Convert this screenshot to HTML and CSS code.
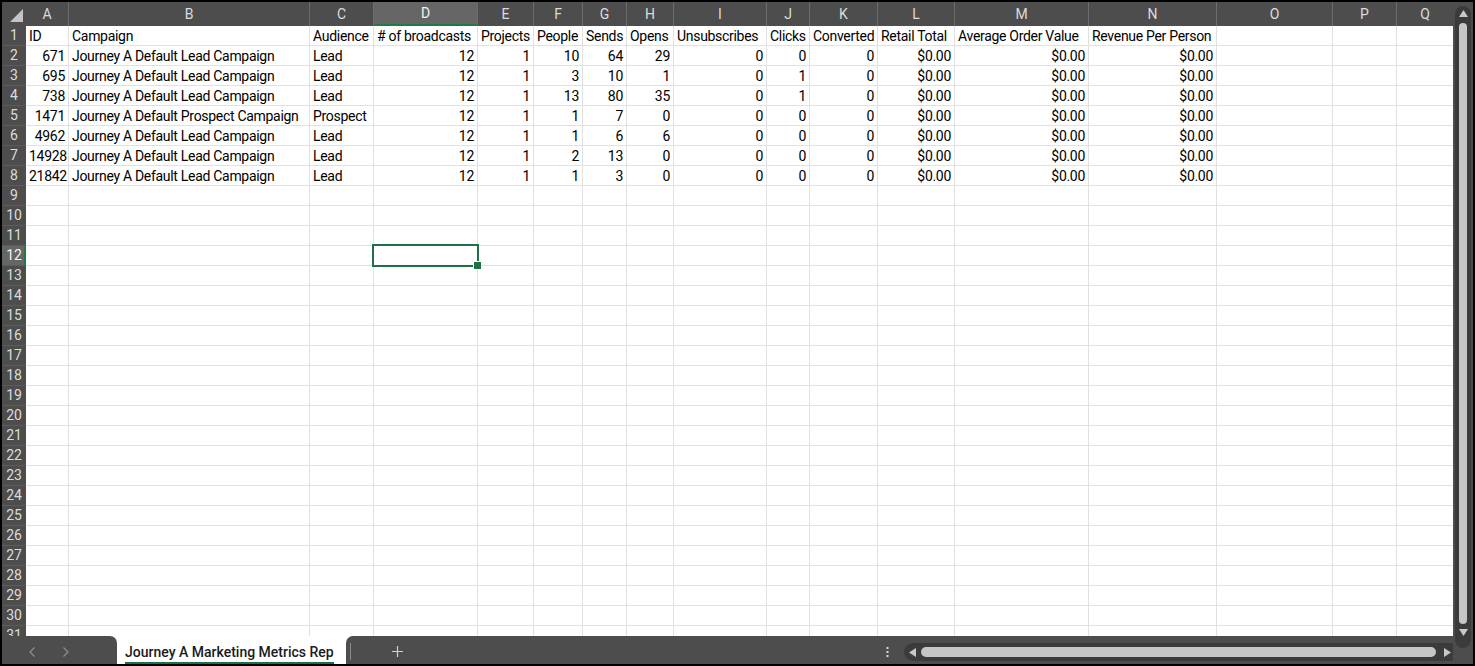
FILE: index.html
```html
<!DOCTYPE html>
<html>
<head>
<meta charset="utf-8">
<title>Journey A Marketing Metrics Rep</title>
<link rel="stylesheet" href="styles.css">
</head>
<body>
<div class="window">
  <div class="workarea">
    <div class="sheet">
      <div class="grid">
        <div class="corner"><svg width="24" height="24" viewBox="0 0 24 24"><polygon points="21,7 21,20 8,20" fill="#c4c4c4"/></svg></div>
        <div class="ch">A</div><div class="ch">B</div><div class="ch">C</div><div class="ch sel">D</div><div class="ch">E</div><div class="ch">F</div><div class="ch">G</div><div class="ch">H</div><div class="ch">I</div><div class="ch">J</div><div class="ch">K</div><div class="ch">L</div><div class="ch">M</div><div class="ch">N</div><div class="ch">O</div><div class="ch">P</div><div class="ch last">Q</div>

        <div class="rh">1</div><div class="c">ID</div><div class="c">Campaign</div><div class="c">Audience</div><div class="c"># of broadcasts</div><div class="c">Projects</div><div class="c">People</div><div class="c">Sends</div><div class="c">Opens</div><div class="c">Unsubscribes</div><div class="c">Clicks</div><div class="c">Converted</div><div class="c">Retail Total</div><div class="c">Average Order Value</div><div class="c">Revenue Per Person</div><div class="c"></div><div class="c"></div><div class="c q"></div>

        <div class="rh">2</div><div class="c n">671</div><div class="c">Journey A Default Lead Campaign</div><div class="c">Lead</div><div class="c n">12</div><div class="c n">1</div><div class="c n">10</div><div class="c n">64</div><div class="c n">29</div><div class="c n">0</div><div class="c n">0</div><div class="c n">0</div><div class="c n">$0.00</div><div class="c n">$0.00</div><div class="c n">$0.00</div><div class="c"></div><div class="c"></div><div class="c q"></div>

        <div class="rh">3</div><div class="c n">695</div><div class="c">Journey A Default Lead Campaign</div><div class="c">Lead</div><div class="c n">12</div><div class="c n">1</div><div class="c n">3</div><div class="c n">10</div><div class="c n">1</div><div class="c n">0</div><div class="c n">1</div><div class="c n">0</div><div class="c n">$0.00</div><div class="c n">$0.00</div><div class="c n">$0.00</div><div class="c"></div><div class="c"></div><div class="c q"></div>

        <div class="rh">4</div><div class="c n">738</div><div class="c">Journey A Default Lead Campaign</div><div class="c">Lead</div><div class="c n">12</div><div class="c n">1</div><div class="c n">13</div><div class="c n">80</div><div class="c n">35</div><div class="c n">0</div><div class="c n">1</div><div class="c n">0</div><div class="c n">$0.00</div><div class="c n">$0.00</div><div class="c n">$0.00</div><div class="c"></div><div class="c"></div><div class="c q"></div>

        <div class="rh">5</div><div class="c n">1471</div><div class="c">Journey A Default Prospect Campaign</div><div class="c">Prospect</div><div class="c n">12</div><div class="c n">1</div><div class="c n">1</div><div class="c n">7</div><div class="c n">0</div><div class="c n">0</div><div class="c n">0</div><div class="c n">0</div><div class="c n">$0.00</div><div class="c n">$0.00</div><div class="c n">$0.00</div><div class="c"></div><div class="c"></div><div class="c q"></div>

        <div class="rh">6</div><div class="c n">4962</div><div class="c">Journey A Default Lead Campaign</div><div class="c">Lead</div><div class="c n">12</div><div class="c n">1</div><div class="c n">1</div><div class="c n">6</div><div class="c n">6</div><div class="c n">0</div><div class="c n">0</div><div class="c n">0</div><div class="c n">$0.00</div><div class="c n">$0.00</div><div class="c n">$0.00</div><div class="c"></div><div class="c"></div><div class="c q"></div>

        <div class="rh">7</div><div class="c n">14928</div><div class="c">Journey A Default Lead Campaign</div><div class="c">Lead</div><div class="c n">12</div><div class="c n">1</div><div class="c n">2</div><div class="c n">13</div><div class="c n">0</div><div class="c n">0</div><div class="c n">0</div><div class="c n">0</div><div class="c n">$0.00</div><div class="c n">$0.00</div><div class="c n">$0.00</div><div class="c"></div><div class="c"></div><div class="c q"></div>

        <div class="rh">8</div><div class="c n">21842</div><div class="c">Journey A Default Lead Campaign</div><div class="c">Lead</div><div class="c n">12</div><div class="c n">1</div><div class="c n">1</div><div class="c n">3</div><div class="c n">0</div><div class="c n">0</div><div class="c n">0</div><div class="c n">0</div><div class="c n">$0.00</div><div class="c n">$0.00</div><div class="c n">$0.00</div><div class="c"></div><div class="c"></div><div class="c q"></div>

        <div class="rh">9</div><div class="c"></div><div class="c"></div><div class="c"></div><div class="c"></div><div class="c"></div><div class="c"></div><div class="c"></div><div class="c"></div><div class="c"></div><div class="c"></div><div class="c"></div><div class="c"></div><div class="c"></div><div class="c"></div><div class="c"></div><div class="c"></div><div class="c q"></div>
        <div class="rh">10</div><div class="c"></div><div class="c"></div><div class="c"></div><div class="c"></div><div class="c"></div><div class="c"></div><div class="c"></div><div class="c"></div><div class="c"></div><div class="c"></div><div class="c"></div><div class="c"></div><div class="c"></div><div class="c"></div><div class="c"></div><div class="c"></div><div class="c q"></div>
        <div class="rh">11</div><div class="c"></div><div class="c"></div><div class="c"></div><div class="c"></div><div class="c"></div><div class="c"></div><div class="c"></div><div class="c"></div><div class="c"></div><div class="c"></div><div class="c"></div><div class="c"></div><div class="c"></div><div class="c"></div><div class="c"></div><div class="c"></div><div class="c q"></div>
        <div class="rh sel">12</div><div class="c"></div><div class="c"></div><div class="c"></div><div class="c active"></div><div class="c"></div><div class="c"></div><div class="c"></div><div class="c"></div><div class="c"></div><div class="c"></div><div class="c"></div><div class="c"></div><div class="c"></div><div class="c"></div><div class="c"></div><div class="c"></div><div class="c q"></div>
        <div class="rh">13</div><div class="c"></div><div class="c"></div><div class="c"></div><div class="c"></div><div class="c"></div><div class="c"></div><div class="c"></div><div class="c"></div><div class="c"></div><div class="c"></div><div class="c"></div><div class="c"></div><div class="c"></div><div class="c"></div><div class="c"></div><div class="c"></div><div class="c q"></div>
        <div class="rh">14</div><div class="c"></div><div class="c"></div><div class="c"></div><div class="c"></div><div class="c"></div><div class="c"></div><div class="c"></div><div class="c"></div><div class="c"></div><div class="c"></div><div class="c"></div><div class="c"></div><div class="c"></div><div class="c"></div><div class="c"></div><div class="c"></div><div class="c q"></div>
        <div class="rh">15</div><div class="c"></div><div class="c"></div><div class="c"></div><div class="c"></div><div class="c"></div><div class="c"></div><div class="c"></div><div class="c"></div><div class="c"></div><div class="c"></div><div class="c"></div><div class="c"></div><div class="c"></div><div class="c"></div><div class="c"></div><div class="c"></div><div class="c q"></div>
        <div class="rh">16</div><div class="c"></div><div class="c"></div><div class="c"></div><div class="c"></div><div class="c"></div><div class="c"></div><div class="c"></div><div class="c"></div><div class="c"></div><div class="c"></div><div class="c"></div><div class="c"></div><div class="c"></div><div class="c"></div><div class="c"></div><div class="c"></div><div class="c q"></div>
        <div class="rh">17</div><div class="c"></div><div class="c"></div><div class="c"></div><div class="c"></div><div class="c"></div><div class="c"></div><div class="c"></div><div class="c"></div><div class="c"></div><div class="c"></div><div class="c"></div><div class="c"></div><div class="c"></div><div class="c"></div><div class="c"></div><div class="c"></div><div class="c q"></div>
        <div class="rh">18</div><div class="c"></div><div class="c"></div><div class="c"></div><div class="c"></div><div class="c"></div><div class="c"></div><div class="c"></div><div class="c"></div><div class="c"></div><div class="c"></div><div class="c"></div><div class="c"></div><div class="c"></div><div class="c"></div><div class="c"></div><div class="c"></div><div class="c q"></div>
        <div class="rh">19</div><div class="c"></div><div class="c"></div><div class="c"></div><div class="c"></div><div class="c"></div><div class="c"></div><div class="c"></div><div class="c"></div><div class="c"></div><div class="c"></div><div class="c"></div><div class="c"></div><div class="c"></div><div class="c"></div><div class="c"></div><div class="c"></div><div class="c q"></div>
        <div class="rh">20</div><div class="c"></div><div class="c"></div><div class="c"></div><div class="c"></div><div class="c"></div><div class="c"></div><div class="c"></div><div class="c"></div><div class="c"></div><div class="c"></div><div class="c"></div><div class="c"></div><div class="c"></div><div class="c"></div><div class="c"></div><div class="c"></div><div class="c q"></div>
        <div class="rh">21</div><div class="c"></div><div class="c"></div><div class="c"></div><div class="c"></div><div class="c"></div><div class="c"></div><div class="c"></div><div class="c"></div><div class="c"></div><div class="c"></div><div class="c"></div><div class="c"></div><div class="c"></div><div class="c"></div><div class="c"></div><div class="c"></div><div class="c q"></div>
        <div class="rh">22</div><div class="c"></div><div class="c"></div><div class="c"></div><div class="c"></div><div class="c"></div><div class="c"></div><div class="c"></div><div class="c"></div><div class="c"></div><div class="c"></div><div class="c"></div><div class="c"></div><div class="c"></div><div class="c"></div><div class="c"></div><div class="c"></div><div class="c q"></div>
        <div class="rh">23</div><div class="c"></div><div class="c"></div><div class="c"></div><div class="c"></div><div class="c"></div><div class="c"></div><div class="c"></div><div class="c"></div><div class="c"></div><div class="c"></div><div class="c"></div><div class="c"></div><div class="c"></div><div class="c"></div><div class="c"></div><div class="c"></div><div class="c q"></div>
        <div class="rh">24</div><div class="c"></div><div class="c"></div><div class="c"></div><div class="c"></div><div class="c"></div><div class="c"></div><div class="c"></div><div class="c"></div><div class="c"></div><div class="c"></div><div class="c"></div><div class="c"></div><div class="c"></div><div class="c"></div><div class="c"></div><div class="c"></div><div class="c q"></div>
        <div class="rh">25</div><div class="c"></div><div class="c"></div><div class="c"></div><div class="c"></div><div class="c"></div><div class="c"></div><div class="c"></div><div class="c"></div><div class="c"></div><div class="c"></div><div class="c"></div><div class="c"></div><div class="c"></div><div class="c"></div><div class="c"></div><div class="c"></div><div class="c q"></div>
        <div class="rh">26</div><div class="c"></div><div class="c"></div><div class="c"></div><div class="c"></div><div class="c"></div><div class="c"></div><div class="c"></div><div class="c"></div><div class="c"></div><div class="c"></div><div class="c"></div><div class="c"></div><div class="c"></div><div class="c"></div><div class="c"></div><div class="c"></div><div class="c q"></div>
        <div class="rh">27</div><div class="c"></div><div class="c"></div><div class="c"></div><div class="c"></div><div class="c"></div><div class="c"></div><div class="c"></div><div class="c"></div><div class="c"></div><div class="c"></div><div class="c"></div><div class="c"></div><div class="c"></div><div class="c"></div><div class="c"></div><div class="c"></div><div class="c q"></div>
        <div class="rh">28</div><div class="c"></div><div class="c"></div><div class="c"></div><div class="c"></div><div class="c"></div><div class="c"></div><div class="c"></div><div class="c"></div><div class="c"></div><div class="c"></div><div class="c"></div><div class="c"></div><div class="c"></div><div class="c"></div><div class="c"></div><div class="c"></div><div class="c q"></div>
        <div class="rh">29</div><div class="c"></div><div class="c"></div><div class="c"></div><div class="c"></div><div class="c"></div><div class="c"></div><div class="c"></div><div class="c"></div><div class="c"></div><div class="c"></div><div class="c"></div><div class="c"></div><div class="c"></div><div class="c"></div><div class="c"></div><div class="c"></div><div class="c q"></div>
        <div class="rh">30</div><div class="c"></div><div class="c"></div><div class="c"></div><div class="c"></div><div class="c"></div><div class="c"></div><div class="c"></div><div class="c"></div><div class="c"></div><div class="c"></div><div class="c"></div><div class="c"></div><div class="c"></div><div class="c"></div><div class="c"></div><div class="c"></div><div class="c q"></div>
        <div class="rh">31</div><div class="c"></div><div class="c"></div><div class="c"></div><div class="c"></div><div class="c"></div><div class="c"></div><div class="c"></div><div class="c"></div><div class="c"></div><div class="c"></div><div class="c"></div><div class="c"></div><div class="c"></div><div class="c"></div><div class="c"></div><div class="c"></div><div class="c q"></div>
      </div>
    </div>
    <div class="tabbar">
      <div class="nav">
        <svg width="115" height="28" viewBox="0 0 115 28"><polyline points="32.5,11.5 28,16 32.5,20.5" fill="none" stroke="#8c8c8c" stroke-width="1.3"/><polyline points="61.5,11.5 66,16 61.5,20.5" fill="none" stroke="#8c8c8c" stroke-width="1.3"/></svg>
      </div>
      <div class="tab"><span class="tab-label">Journey A Marketing Metrics Rep</span></div>
      <div class="rest">
        <span class="sep"></span>
        <svg class="add" width="11" height="11" viewBox="0 0 11 11"><path d="M5.5 0V11M0 5.5H11" stroke="#d2d2d2" stroke-width="1.2"/></svg>
        <svg class="dots" width="3" height="12" viewBox="0 0 3 12"><rect x="0.5" y="1" width="2" height="2" fill="#d8d8d8"/><rect x="0.5" y="5" width="2" height="2" fill="#d8d8d8"/><rect x="0.5" y="9" width="2" height="2" fill="#d8d8d8"/></svg>
        <div class="hscroll">
          <svg class="harrow-l" width="7" height="9" viewBox="0 0 7 9"><polygon points="7,0 7,9 0,4.5" fill="#c8c8c8"/></svg>
          <div class="hthumb"></div>
          <svg class="harrow-r" width="7" height="9" viewBox="0 0 7 9"><polygon points="0,0 0,9 7,4.5" fill="#c8c8c8"/></svg>
        </div>
      </div>
    </div>
  </div>
  <div class="vcol">
    <div class="vtrack">
      <svg class="varrow-u" width="9" height="7" viewBox="0 0 9 7"><polygon points="0,7 9,7 4.5,0" fill="#c8c8c8"/></svg>
      <div class="vthumb"></div>
      <svg class="varrow-d" width="9" height="7" viewBox="0 0 9 7"><polygon points="0,0 9,0 4.5,7" fill="#c8c8c8"/></svg>
    </div>
  </div>
</div>
</body>
</html>
```

FILE: styles.css
```css
* { box-sizing: border-box; }
html, body { margin: 0; padding: 0; background: #000; }

.window {
  width: 1475px;
  height: 666px;
  border: 2px solid #000;
  display: flex;
  background: #4d4d4d;
  overflow: hidden;
}

.workarea {
  width: 1451px;
  display: flex;
  flex-direction: column;
}

.sheet {
  height: 634px;
  overflow: hidden;
  background: #fff;
}

.grid {
  display: grid;
  grid-template-columns: 24px 43px 241px 64px 104px 56px 49px 44px 47px 93px 43px 68px 77px 134px 128px 116px 64px 1fr;
  grid-template-rows: 24px;
  grid-auto-rows: 20px;
  font-family: Roboto, "Liberation Sans", sans-serif;
}

.corner {
  background: #4d4d4d;
}
.corner svg { display: block; }

.ch {
  background: #4d4d4d;
  color: #dcdcdc;
  font-size: 14px;
  line-height: 24px;
  text-align: center;
  border-right: 1px solid #6c6c6c;
}
.ch.last { border-right: none; }
.ch.sel {
  background: #666666;
  color: #f2f2f2;
  border-bottom: 2px solid #1f7a45;
  line-height: 22px;
}

.rh {
  background: #4d4d4d;
  color: #dcdcdc;
  font-size: 14px;
  line-height: 19px;
  text-align: center;
  border-bottom: 1px solid #5c5c5c;
}
.rh.sel {
  background: #666666;
  color: #f2f2f2;
  box-shadow: inset -2px 0 0 #1f7a45;
}

.c {
  border-right: 1px solid #e1e1e1;
  border-bottom: 1px solid #e1e1e1;
  color: #000;
  font-size: 14px;
  line-height: 18px;
  padding: 1px 3px 0 3px;
  white-space: nowrap;
  overflow: visible;
  letter-spacing: -0.3px;
}
.c.n { text-align: right; padding-right: 3px; }
.c.q { border-right: none; }

.c.active { position: relative; }
.c.active::after {
  content: "";
  position: absolute;
  left: -2px;
  top: -2px;
  right: -2px;
  bottom: -2px;
  border: 2px solid #1f7145;
}
.c.active::before {
  content: "";
  position: absolute;
  right: -4px;
  bottom: -4px;
  width: 7px;
  height: 7px;
  background: #1f7145;
  border-left: 1px solid #fff;
  border-top: 1px solid #fff;
  z-index: 2;
}

.tabbar {
  height: 28px;
  display: flex;
  background: #fff;
}

.nav {
  width: 115px;
  background: #4d4d4d;
  border-top-right-radius: 7px;
}
.nav svg { display: block; }

.tab {
  width: 229px;
  background: #fff;
  padding: 6px 0 0 8px;
  font-family: Roboto, "Liberation Sans", sans-serif;
}
.tab-label {
  display: inline-block;
  font-size: 14px;
  font-weight: 500;
  line-height: 17px;
  color: #1b1b1b;
  padding-bottom: 1px;
  border-bottom: 2px solid #1f7145;
  white-space: nowrap;
}

.rest {
  flex: 1;
  background: #4d4d4d;
  border-top-left-radius: 7px;
  display: flex;
  align-items: flex-start;
}

.sep {
  width: 1px;
  height: 17px;
  background: #8a8a8a;
  margin: 7px 0 0 4px;
}

.add {
  display: block;
  margin: 10px 0 0 41px;
}

.dots {
  display: block;
  margin: 10px 15px 0 auto;
}

.hscroll {
  width: 549px;
  height: 18px;
  margin-top: 7px;
  background: #3b3b3b;
  border-radius: 9px 0 0 9px;
  display: flex;
  align-items: center;
}
.harrow-l { display: block; margin-left: 5px; }
.hthumb {
  flex: 1;
  height: 10px;
  margin-left: 5px;
  background: #c6c6c6;
  border-radius: 5px;
}
.harrow-r { display: block; margin: 0 2px 0 8px; }

.vcol {
  width: 20px;
  background: #4d4d4d;
}
.vtrack {
  width: 16px;
  height: 642px;
  margin: 4px 0 0 2px;
  background: #3b3b3b;
  border-radius: 8px;
  display: flex;
  flex-direction: column;
  align-items: center;
}
.varrow-u { display: block; margin-top: 4px; }
.vthumb {
  width: 8px;
  height: 601px;
  margin-top: 6px;
  background: #c6c6c6;
  border-radius: 4px;
}
.varrow-d { display: block; margin-top: 5px; }
```
